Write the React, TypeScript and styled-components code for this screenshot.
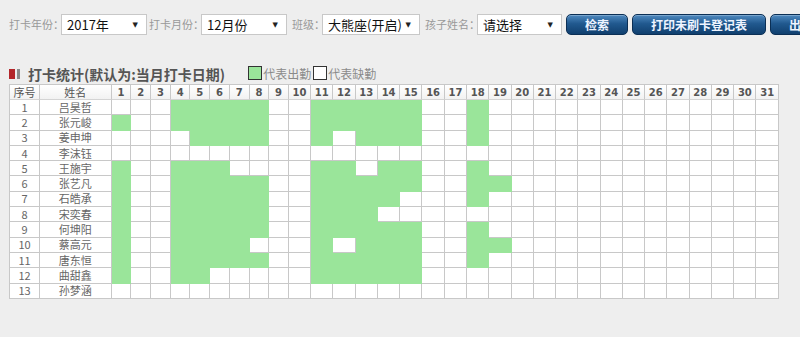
import React from 'react';
import styled, { createGlobalStyle } from 'styled-components';

const GlobalStyle = createGlobalStyle`
  html, body { margin: 0; padding: 0; background: #eeeeee; overflow: hidden; }
  body { font-family: "Noto Sans CJK SC", "Noto Sans", sans-serif; }
`;

const Page = styled.div`
  width: 800px;
  height: 337px;
  overflow: hidden;
  box-sizing: border-box;
  padding: 14px 0 0 9px;
`;

const Toolbar = styled.div`
  display: flex;
  align-items: center;
  height: 21px;
  white-space: nowrap;
  flex-wrap: nowrap;
  overflow: hidden;
`;

const Label = styled.span`
  font-size: 11px;
  color: #999;
  line-height: 21px;
  margin-right: -3px;
  flex-shrink: 0;
`;

const Select = styled.div<{ $w: number; $gap?: number }>`
  width: ${(p) => p.$w}px;
  height: 21px;
  box-sizing: border-box;
  background: #fff;
  border: 1px solid #c8c8c8;
  display: flex;
  align-items: center;
  justify-content: space-between;
  padding: 0 8px 0 5px;
  font-size: 13px;
  color: #111;
  margin-right: ${(p) => p.$gap ?? 4}px;
  flex-shrink: 0;
`;

const Arrow = styled.span`
  font-family: "DejaVu Sans", sans-serif;
  font-size: 7px;
  color: #222;
`;

const Btn = styled.button`
  height: 21px;
  padding: 0 18px;
  margin: 0 4px 0 0;
  border: 1px solid #0b2f55;
  border-radius: 5px;
  background: linear-gradient(to bottom, #4f8ac0 0%, #21598f 45%, #103f6e 100%);
  box-shadow: inset 0 1px 0 rgba(255, 255, 255, 0.25);
  color: #eef4ff;
  font: bold 12px "Noto Sans CJK SC", sans-serif;
  line-height: 19px;
  flex-shrink: 0;
  white-space: nowrap;
`;

const TitleRow = styled.div`
  display: flex;
  align-items: center;
  height: 20px;
  margin-top: 29px;
`;

const Mark = styled.span<{ $c: string; $w: number }>`
  display: inline-block;
  width: ${(p) => p.$w}px;
  height: 10px;
  background: ${(p) => p.$c};
  margin-right: 2px;
`;

const Title = styled.span`
  font-size: 14px;
  font-weight: bold;
  color: #555;
  margin-left: 6px;
  line-height: 20px;
`;

const Legend = styled.div`
  display: flex;
  align-items: center;
  margin-left: 21px;
  font-size: 12px;
  color: #8a8a8a;
  margin-top: -2px;
`;

const Swatch = styled.span<{ $c: string }>`
  display: inline-block;
  width: 12px;
  height: 12px;
  border: 1px solid #333;
  background: ${(p) => p.$c};
  margin: 0 1px 0 2px;
`;

const Table = styled.table`
  border-collapse: separate;
  border-spacing: 0;
  table-layout: fixed;
  width: 770px;
  border-top: 1px solid #c8c8c8;
  border-left: 1px solid #c8c8c8;
  background: #fff;
`;

const Th = styled.th<{ $num?: boolean }>`
  height: 15px;
  box-sizing: border-box;
  padding: 0;
  border-right: 1px solid #c8c8c8;
  border-bottom: 1px solid #d4d4d4;
  font-family: ${(p) => (p.$num ? '"DejaVu Sans", sans-serif' : '"Noto Sans CJK SC", sans-serif')};
  font-weight: ${(p) => (p.$num ? 700 : 400)};
  font-size: ${(p) => (p.$num ? '10px' : '11px')};
  color: #555;
  line-height: 13px;
  text-align: center;
  white-space: nowrap;
  overflow: hidden;
  background: linear-gradient(#ffffff, #f2f2f2);
`;

const Td = styled.td<{ $on?: boolean }>`
  height: 15.3px;
  box-sizing: border-box;
  padding: 0;
  text-align: center;
  border-right: 1px solid ${(p) => (p.$on ? '#9ae59a' : '#c8c8c8')};
  border-bottom: 1px solid ${(p) => (p.$on ? '#9ae59a' : '#c8c8c8')};
  background: ${(p) => (p.$on ? '#9ae59a' : '#fff')};
  font-size: 11px;
  color: #666;
  line-height: 13px;
  white-space: nowrap;
  overflow: hidden;
`;

const rows: [string, number[]][] = [
  ['吕昊哲', [4, 5, 6, 7, 8, 11, 12, 13, 14, 15, 18]],
  ['张元峻', [1, 4, 5, 6, 7, 8, 11, 12, 13, 14, 15, 18]],
  ['姜申坤', [5, 6, 7, 8, 11, 13, 14, 15, 18]],
  ['李沫钰', []],
  ['王施宇', [1, 4, 5, 6, 11, 12, 14, 15, 18]],
  ['张艺凡', [1, 4, 5, 6, 7, 8, 11, 12, 13, 14, 15, 18, 19]],
  ['石皓承', [1, 4, 5, 6, 7, 8, 11, 12, 13, 14, 18]],
  ['宋奕春', [1, 4, 5, 6, 7, 8, 11, 12, 13]],
  ['何坤阳', [1, 4, 5, 6, 7, 8, 11, 12, 13, 14, 15, 18]],
  ['蔡高元', [1, 4, 5, 6, 7, 11, 13, 14, 15, 18, 19]],
  ['唐东恒', [1, 4, 5, 6, 7, 8, 11, 12, 13, 14, 15, 18]],
  ['曲甜鑫', [1, 4, 5, 11, 12, 13, 14, 15]],
  ['孙梦涵', []],
];

const days = Array.from({ length: 31 }, (_, i) => i + 1);

export default function App() {
  return (
    <>
      <GlobalStyle />
      <Page>
        <Toolbar>
          <Label>打卡年份：</Label>
          <Select $w={86} $gap={2}>
            <span>2017年</span>
            <Arrow>▼</Arrow>
          </Select>
          <Label>打卡月份：</Label>
          <Select $w={86} $gap={5}>
            <span>12月份</span>
            <Arrow>▼</Arrow>
          </Select>
          <Label>班级：</Label>
          <Select $w={98} $gap={5}>
            <span>大熊座(开启)</span>
            <Arrow>▼</Arrow>
          </Select>
          <Label>孩子姓名：</Label>
          <Select $w={85}>
            <span>请选择</span>
            <Arrow>▼</Arrow>
          </Select>
          <Btn>检索</Btn>
          <Btn>打印未刷卡登记表</Btn>
          <Btn>出勤统计导出</Btn>
        </Toolbar>

        <TitleRow>
          <Mark $c="#b3262a" $w={6} />
          <Mark $c="#8a8a8a" $w={3} />
          <Title>打卡统计(默认为:当月打卡日期)</Title>
          <Legend>
            <Swatch $c="#9ae59a" />
            代表出勤
            <Swatch $c="#fff" />
            代表缺勤
          </Legend>
        </TitleRow>

        <Table>
          <colgroup>
            <col style={{ width: 30 }} />
            <col style={{ width: 71.7 }} />
            {days.map((d) => (
              <col key={d} style={{ width: d < 10 ? 19.7 : 22.27 }} />
            ))}
          </colgroup>
          <thead>
            <tr>
              <Th>序号</Th>
              <Th>姓名</Th>
              {days.map((d) => (
                <Th key={d} $num>
                  {d}
                </Th>
              ))}
            </tr>
          </thead>
          <tbody>
            {rows.map(([name, on], i) => (
              <tr key={name}>
                <Td>{i + 1}</Td>
                <Td>{name}</Td>
                {days.map((d) => (
                  <Td key={d} $on={on.includes(d)} />
                ))}
              </tr>
            ))}
          </tbody>
        </Table>
      </Page>
    </>
  );
}
